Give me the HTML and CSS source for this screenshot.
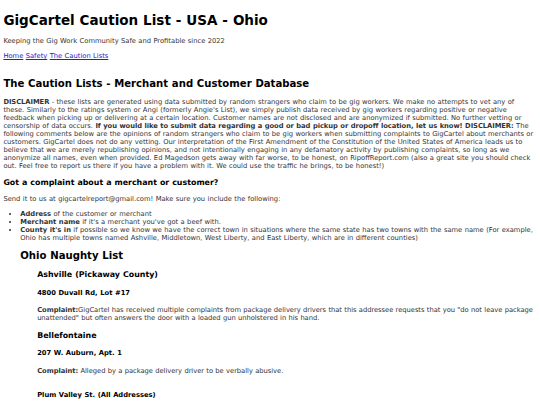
FILE: index.html
```html
<!DOCTYPE html>
<html>
<head>
<meta charset="utf-8">
<link rel="stylesheet" href="styles.css">
</head>
<body>
<h1 class="title">GigCartel Caution List - USA - Ohio</h1>
<p class="tagline">Keeping the Gig Work Community Safe and Profitable since 2022</p>
<nav class="nav"><a href="#">Home</a> <a href="#">Safety</a> <a href="#">The Caution Lists</a></nav>
<h2 class="page-heading">The Caution Lists - Merchant and Customer Database</h2>
<p class="text disclaimer"><b>DISCLAIMER</b> - these lists are generated using data submitted by random strangers who claim to be gig workers. We make no attempts to vet any of these. Similarly to the ratings system or Angi (formerly Angie's List), we simply publish data received by gig workers regarding positive or negative feedback when picking up or delivering at a certain location. Customer names are not disclosed and are anonymized if submitted. No further vetting or censorship of data occurs. <b>If you would like to submit data regarding a good or bad pickup or dropoff location, let us know! DISCLAIMER:</b> The following comments below are the opinions of random strangers who claim to be gig workers when submitting complaints to GigCartel about merchants or customers. GigCartel does not do any vetting. Our interpretation of the First Amendment of the Constitution of the United States of America leads us to believe that we are merely republishing opinions, and not intentionally engaging in any defamatory activity by publishing complaints, so long as we anonymize all names, even when provided. Ed Magedson gets away with far worse, to be honest, on RipoffReport.com (also a great site you should check out. Feel free to report us there if you have a problem with it. We could use the traffic he brings, to be honest!)</p>
<h3 class="sub-heading">Got a complaint about a merchant or customer?</h3>
<p class="text">Send it to us at gigcartelreport@gmail.com! Make sure you include the following:</p>
<ul class="bullets">
<li><b>Address</b> of the customer or merchant</li>
<li><b>Merchant name</b> if it's a merchant you've got a beef with.</li>
<li><b>County it's in</b> if possible so we know we have the correct town in situations where the same state has two towns with the same name (For example, Ohio has multiple towns named Ashville, Middletown, West Liberty, and East Liberty, which are in different counties)</li>
</ul>
<section class="state">
<h2 class="state-heading">Ohio Naughty List</h2>
<div class="towns">
<h3 class="town">Ashville (Pickaway County)</h3>
<h4 class="address">4800 Duvall Rd, Lot #17</h4>
<p class="text complaint"><b>Complaint:</b>GigCartel has received multiple complaints from package delivery drivers that this addressee requests that you "do not leave package unattended" but often answers the door with a loaded gun unholstered in his hand.</p>
<h3 class="town">Bellefontaine</h3>
<h4 class="address">207 W. Auburn, Apt. 1</h4>
<p class="text complaint"><b>Complaint:</b> Alleged by a package delivery driver to be verbally abusive.</p>
<h4 class="address address-spaced">Plum Valley St. (All Addresses)</h4>
</div>
</section>
</body>
</html>
```
FILE: styles.css
```css
html, body {
  background: #fff;
}
body {
  margin: 3.375px;
  font-family: "DejaVu Sans", Verdana, sans-serif;
  font-size: 6.75px;
  line-height: 1.185;
  word-spacing: 0.23px;
  color: #333;
}
.title {
  font-size: 13.5px;
  margin: 9.05px 0;
  color: #000;
}
.tagline {
  margin: 6.75px 0;
}
.nav {
  display: block;
  margin-bottom: 17.5px;
}
.nav a {
  color: #22c;
  text-decoration: underline;
}
.page-heading {
  font-size: 10.125px;
  color: #000;
  margin: 8.4px 0;
}
.text {
  margin: 6.75px 0;
}
.disclaimer b {
  letter-spacing: -0.06px;
}
.complaint {
  letter-spacing: -0.04px;
}
.sub-heading {
  font-size: 7.9px;
  color: #000;
  margin: 7.9px 0;
}
.bullets {
  padding-left: 16.875px;
  margin: 6.75px 0;
}
.state {
  margin-left: 16.875px;
}
.state-heading {
  font-size: 10.125px;
  color: #000;
  margin: 8.4px 0;
}
.towns {
  margin-left: 16.875px;
}
.town {
  font-size: 7.9px;
  color: #000;
  margin: 8.2px 0;
}
.address {
  font-size: 6.75px;
  color: #000;
  margin: 9.3px 0;
}
.address-spaced {
  margin-top: 16.1px;
}
```
